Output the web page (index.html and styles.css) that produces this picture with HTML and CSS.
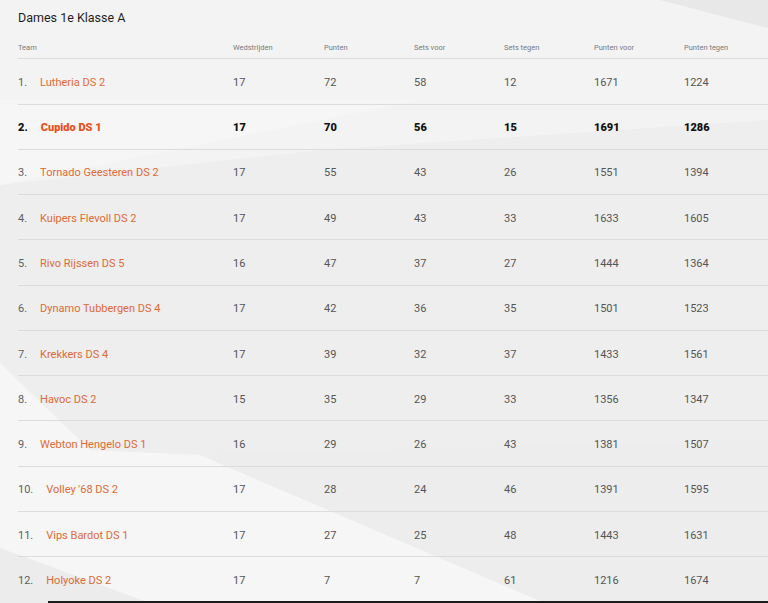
FILE: index.html
```html
<!DOCTYPE html>
<html lang="nl">
<head>
<meta charset="utf-8">
<title>Dames 1e Klasse A</title>
<link rel="stylesheet" href="styles.css">
</head>
<body>
<main class="page">
  <h1 class="title">Dames 1e Klasse A</h1>
  <div class="table">
    <div class="row head">
      <div class="cell">Team</div>
      <div class="cell">Wedstrijden</div>
      <div class="cell">Punten</div>
      <div class="cell">Sets voor</div>
      <div class="cell">Sets tegen</div>
      <div class="cell">Punten voor</div>
      <div class="cell">Punten tegen</div>
    </div>
    <div class="row"><div class="cell team"><span class="rank">1.</span><a class="name">Lutheria DS 2</a></div><div class="cell">17</div><div class="cell">72</div><div class="cell">58</div><div class="cell">12</div><div class="cell">1671</div><div class="cell">1224</div></div>
    <div class="row own"><div class="cell team"><span class="rank">2.</span><a class="name">Cupido DS 1</a></div><div class="cell">17</div><div class="cell">70</div><div class="cell">56</div><div class="cell">15</div><div class="cell">1691</div><div class="cell">1286</div></div>
    <div class="row"><div class="cell team"><span class="rank">3.</span><a class="name">Tornado Geesteren DS 2</a></div><div class="cell">17</div><div class="cell">55</div><div class="cell">43</div><div class="cell">26</div><div class="cell">1551</div><div class="cell">1394</div></div>
    <div class="row"><div class="cell team"><span class="rank">4.</span><a class="name">Kuipers Flevoll DS 2</a></div><div class="cell">17</div><div class="cell">49</div><div class="cell">43</div><div class="cell">33</div><div class="cell">1633</div><div class="cell">1605</div></div>
    <div class="row"><div class="cell team"><span class="rank">5.</span><a class="name">Rivo Rijssen DS 5</a></div><div class="cell">16</div><div class="cell">47</div><div class="cell">37</div><div class="cell">27</div><div class="cell">1444</div><div class="cell">1364</div></div>
    <div class="row"><div class="cell team"><span class="rank">6.</span><a class="name">Dynamo Tubbergen DS 4</a></div><div class="cell">17</div><div class="cell">42</div><div class="cell">36</div><div class="cell">35</div><div class="cell">1501</div><div class="cell">1523</div></div>
    <div class="row"><div class="cell team"><span class="rank">7.</span><a class="name">Krekkers DS 4</a></div><div class="cell">17</div><div class="cell">39</div><div class="cell">32</div><div class="cell">37</div><div class="cell">1433</div><div class="cell">1561</div></div>
    <div class="row"><div class="cell team"><span class="rank">8.</span><a class="name">Havoc DS 2</a></div><div class="cell">15</div><div class="cell">35</div><div class="cell">29</div><div class="cell">33</div><div class="cell">1356</div><div class="cell">1347</div></div>
    <div class="row"><div class="cell team"><span class="rank">9.</span><a class="name">Webton Hengelo DS 1</a></div><div class="cell">16</div><div class="cell">29</div><div class="cell">26</div><div class="cell">43</div><div class="cell">1381</div><div class="cell">1507</div></div>
    <div class="row"><div class="cell team"><span class="rank">10.</span><a class="name">Volley '68 DS 2</a></div><div class="cell">17</div><div class="cell">28</div><div class="cell">24</div><div class="cell">46</div><div class="cell">1391</div><div class="cell">1595</div></div>
    <div class="row"><div class="cell team"><span class="rank">11.</span><a class="name">Vips Bardot DS 1</a></div><div class="cell">17</div><div class="cell">27</div><div class="cell">25</div><div class="cell">48</div><div class="cell">1443</div><div class="cell">1631</div></div>
    <div class="row last"><div class="cell team"><span class="rank">12.</span><a class="name">Holyoke DS 2</a></div><div class="cell">17</div><div class="cell">7</div><div class="cell">7</div><div class="cell">61</div><div class="cell">1216</div><div class="cell">1674</div></div>
  </div>
  <div class="edge"></div>
</main>
</body>
</html>
```

FILE: styles.css
```css
html, body {
  margin: 0;
  padding: 0;
}

body {
  width: 768px;
  height: 603px;
  overflow: hidden;
  font-family: Roboto, "Liberation Sans", sans-serif;
  color: #555;
  background-color: #eeeeee;
  background-repeat: no-repeat;
  background-size: 768px 603px;
  background-image: url("data:image/svg+xml,%3Csvg xmlns='http://www.w3.org/2000/svg' width='768' height='603' viewBox='0 0 768 603'%3E%3Crect width='768' height='603' fill='%23eeeeee'/%3E%3Cpolygon points='0,0 660,0 768,28 768,120 320,150 0,185' fill='%23f3f3f3'/%3E%3Cpolygon points='0,100 420,100 0,185' fill='%23f6f6f6'/%3E%3Cpolygon points='660,0 768,0 768,28' fill='%23e8e8e8'/%3E%3Cpolygon points='0,363 90,450 200,455 545,603 0,603' fill='%23f6f6f6'/%3E%3Cpolygon points='200,455 768,440 768,603 545,603' fill='%23ededed'/%3E%3Cpolygon points='0,548 150,603 0,603' fill='%23ececec'/%3E%3C/svg%3E");
}

.page {
  padding: 10px 0 0 18px;
}

.title {
  margin: 0;
  font-size: 12.5px;
  line-height: 15px;
  font-weight: 400;
  color: #1e1e1e;
}

.table {
  margin-top: 12px;
}

.row {
  display: grid;
  grid-template-columns: 215px 91px 90px 90px 90px 90px 1fr;
  align-items: center;
  height: 45.27px;
  box-sizing: border-box;
  padding-top: 2px;
  border-bottom: 1px solid #dcdcdc;
  font-size: 11px;
  color: #555;
}

.row.head {
  height: 22.3px;
  padding-top: 0;
  font-size: 7.5px;
  color: #7a7a7a;
}

.row.last {
  border-bottom: none;
}

.cell {
  white-space: nowrap;
}

.team {
  display: flex;
  align-items: center;
}

.rank {
  color: #5f5f5f;
  margin-right: 13px;
}

.name {
  color: #df6a36;
  text-decoration: none;
}

.own {
  font-weight: 900;
  color: #111;
}

.own .rank {
  color: #111;
}

.own .name {
  color: #e8501a;
}

.edge {
  height: 2px;
  margin-left: 30px;
  margin-top: -1px;
  background: #1c1c1c;
}
```
